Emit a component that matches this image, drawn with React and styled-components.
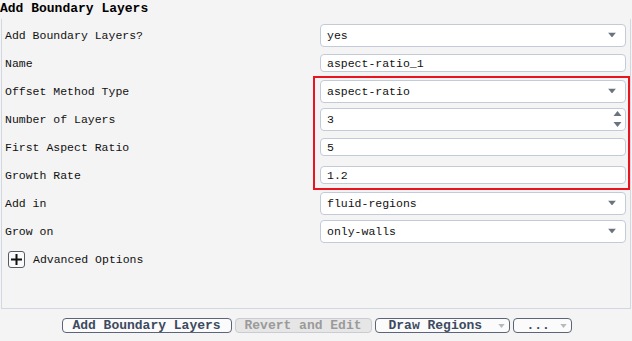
import React from "react";
import styled, { createGlobalStyle } from "styled-components";

const GlobalStyle = createGlobalStyle`
  body {
    margin: 0;
    background: #f4f4f4;
    font-family: "Liberation Mono", "DejaVu Sans Mono", monospace;
    color: #111;
  }
`;

const FIELDS = [
  { label: "Add Boundary Layers?", kind: "select", value: "yes" },
  { label: "Name", kind: "text", value: "aspect-ratio_1" },
  { label: "Offset Method Type", kind: "select", value: "aspect-ratio" },
  { label: "Number of Layers", kind: "spin", value: "3" },
  { label: "First Aspect Ratio", kind: "text", value: "5" },
  { label: "Growth Rate", kind: "text", value: "1.2" },
  { label: "Add in", kind: "select", value: "fluid-regions" },
  { label: "Grow on", kind: "select", value: "only-walls" },
];

const DownArrow = ({ color = "#6b7280", w = 8, h = 5 }) => (
  <svg width={w} height={h} viewBox="0 0 8 5">
    <polygon points="0,0 8,0 4,5" fill={color} />
  </svg>
);

const UpArrow = () => (
  <svg width="9" height="5" viewBox="0 0 8 5">
    <polygon points="0,5 8,5 4,0" fill="#6b7280" />
  </svg>
);

const Field = ({ kind, value }) => {
  if (kind === "text") {
    return (
      <TextBox>
        <span>{value}</span>
      </TextBox>
    );
  }
  return (
    <DropBox>
      <span>{value}</span>
      {kind === "select" ? (
        <ArrowSlot right={9}>
          <DownArrow />
        </ArrowSlot>
      ) : (
        <SpinSlot>
          <UpArrow />
          <svg width="9" height="5" viewBox="0 0 8 5">
            <polygon points="0,0 8,0 4,5" fill="#6b7280" />
          </svg>
        </SpinSlot>
      )}
    </DropBox>
  );
};

export default function App() {
  return (
    <>
      <GlobalStyle />
      <Page>
        <Title>Add Boundary Layers</Title>
        <Panel>
          {FIELDS.map((f) => (
            <Row key={f.label}>
              <Label>{f.label}</Label>
              <Field kind={f.kind} value={f.value} />
            </Row>
          ))}
          <AdvancedRow>
            <PlusBox>
              <svg width="11" height="11" viewBox="0 0 11 11">
                <rect x="4.5" y="0" width="2" height="11" fill="#111" />
                <rect x="0" y="4.5" width="11" height="2" fill="#111" />
              </svg>
            </PlusBox>
            <Label>Advanced Options</Label>
          </AdvancedRow>
          <Highlight />
        </Panel>
        <Footer>
          <Button width={170}>Add Boundary Layers</Button>
          <Button width={137} disabled>
            Revert and Edit
          </Button>
          <MenuButton width={135}>
            <span>Draw Regions</span>
            <DownArrow color="#b4b9c2" w={7} h={4} />
          </MenuButton>
          <MenuButton width={59}>
            <span>...</span>
            <DownArrow color="#b4b9c2" w={7} h={4} />
          </MenuButton>
        </Footer>
      </Page>
    </>
  );
}

const Page = styled.div`
  width: 632px;
  height: 341px;
  display: flex;
  flex-direction: column;
  overflow: hidden;
`;

const Title = styled.div`
  height: 19px;
  line-height: 17px;
  font-size: 13px;
  font-weight: bold;
  color: #000;
`;

const Panel = styled.div`
  position: relative;
  height: 290px;
  margin: 0 1px 0 1px;
  padding: 2px 4px 0 3px;
  box-sizing: border-box;
  border-left: 1px solid #d2d7e1;
  border-right: 1px solid #d2d7e1;
  border-bottom: 1px solid #d2d7e1;
`;

const Row = styled.div`
  height: 28px;
  display: grid;
  grid-template-columns: 315px 1fr;
  align-items: center;
`;

const Label = styled.span`
  font-size: 11.5px;
  color: #111;
  white-space: pre;
`;

const BoxBase = styled.div`
  position: relative;
  box-sizing: border-box;
  background: #fff;
  border: 1px solid #c3cad8;
  border-radius: 4px;
  padding-left: 6px;
  display: flex;
  align-items: center;
  font-size: 11.5px;
  color: #111;
`;

const DropBox = styled(BoxBase)`
  height: 23px;
`;

const TextBox = styled(BoxBase)`
  height: 18px;
`;

const ArrowSlot = styled.span`
  position: absolute;
  right: ${(p) => p.right}px;
  top: 50%;
  transform: translateY(-50%);
  display: flex;
`;

const SpinSlot = styled.span`
  position: absolute;
  right: 3px;
  top: 2px;
  bottom: 3px;
  display: flex;
  flex-direction: column;
  justify-content: space-between;
`;

const AdvancedRow = styled.div`
  height: 28px;
  display: flex;
  align-items: center;
  gap: 8px;
  padding-left: 3px;
`;

const PlusBox = styled.div`
  width: 17px;
  height: 17px;
  box-sizing: border-box;
  border: 1px solid #555b66;
  border-radius: 3px;
  display: flex;
  align-items: center;
  justify-content: center;
  background: #fafafa;
`;

const Highlight = styled.div`
  position: absolute;
  left: 311px;
  top: 57px;
  width: 317px;
  height: 114px;
  box-sizing: border-box;
  border: 2px solid #e8141f;
  pointer-events: none;
`;

const Footer = styled.div`
  flex: 1;
  display: flex;
  justify-content: center;
  align-items: flex-start;
  gap: 3px;
  padding-top: 9px;
  padding-left: 1px;
`;

const Button = styled.div`
  width: ${(p) => p.width}px;
  height: 15px;
  box-sizing: border-box;
  border: 1px solid ${(p) => (p.disabled ? "#c9ccd2" : "#5b6577")};
  border-radius: 4px;
  background: ${(p) => (p.disabled ? "#e6e6e6" : "#fbfbfb")};
  color: ${(p) => (p.disabled ? "#9a9a9a" : "#3d4a5f")};
  font-size: 13px;
  font-weight: bold;
  line-height: 13px;
  display: flex;
  align-items: center;
  justify-content: center;
`;

const MenuButton = styled(Button)`
  justify-content: space-between;
  padding: 0 4px 0 13px;
`;
